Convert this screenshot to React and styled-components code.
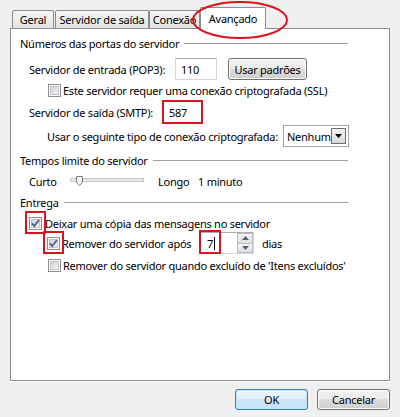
import React from 'react';
import styled, { createGlobalStyle } from 'styled-components';

const GlobalStyle = createGlobalStyle`
  html, body {
    margin: 0;
    padding: 0;
    background: #f0f0f0;
  }
  body {
    font-family: "Noto Sans", "Liberation Sans", sans-serif;
    font-size: 11px;
    letter-spacing: -0.25px;
    color: #000;
  }
`;

const MARK = '#d9141e';

const Dialog = styled.div`
  box-sizing: border-box;
  width: 400px;
  height: 417px;
  padding: 7px 10px 0 10px;
  display: flex;
  flex-direction: column;
`;

const TabStrip = styled.div`
  display: flex;
  align-items: flex-end;
  height: 21px;
  padding-left: 2px;
`;

const Tab = styled.div`
  position: relative;
  box-sizing: border-box;
  width: ${({ $w }) => $w}px;
  height: ${({ $active }) => ($active ? '22px' : '18px')};
  margin-bottom: ${({ $active }) => ($active ? '-1px' : '0')};
  margin-right: ${({ $gap }) => $gap || 0}px;
  display: flex;
  align-items: center;
  justify-content: center;
  border: 1px solid #898c95;
  border-bottom: none;
  border-radius: 2px 2px 0 0;
  background: ${({ $active }) =>
    $active ? '#fff' : 'linear-gradient(#f6f6f6, #e4e4e4)'};
  z-index: ${({ $active }) => ($active ? 2 : 1)};
  white-space: nowrap;
`;

const Ellipse = styled.svg`
  position: absolute;
  left: -9px;
  top: -7px;
  overflow: visible;
  pointer-events: none;
`;

const Panel = styled.div`
  box-sizing: border-box;
  width: 380px;
  height: 353px;
  border: 1px solid #898c95;
  background: #fff;
  padding: 6px 0 0 9px;
  display: flex;
  flex-direction: column;
  box-shadow: 0 1px 0 #fff;
`;

const GroupTitle = styled.div`
  display: flex;
  align-items: center;
  width: 328px;
  height: 16px;
  margin-top: ${({ $top }) => $top || 0}px;
  white-space: nowrap;

  &::after {
    content: '';
    flex: 1;
    height: 1px;
    margin-left: 5px;
    background: #a0a0a0;
  }
`;

const Row = styled.div`
  display: flex;
  align-items: center;
  height: ${({ $h }) => $h || 16}px;
  margin-top: ${({ $top }) => $top || 0}px;
  padding-left: ${({ $indent }) => $indent || 0}px;
  white-space: nowrap;
`;

const Label = styled.span`
  display: inline-block;
  width: ${({ $w }) => ($w ? `${$w}px` : 'auto')};
  margin-left: ${({ $left }) => $left || 0}px;
  flex-shrink: 0;
`;

const TextBox = styled.div`
  box-sizing: border-box;
  width: ${({ $w }) => $w}px;
  height: ${({ $h }) => $h || 22}px;
  padding-left: 5px;
  display: flex;
  align-items: center;
  background: #fff;
  border: ${({ $marked }) => ($marked ? `2px solid ${MARK}` : '1px solid #d3d7dd')};
  border-top-color: ${({ $marked }) => ($marked ? MARK : '#abadb3')};
`;

const PushButton = styled.button`
  box-sizing: border-box;
  width: ${({ $w }) => $w}px;
  height: ${({ $h }) => $h || 22}px;
  margin-left: ${({ $left }) => $left || 0}px;
  padding: 0;
  font: inherit;
  letter-spacing: inherit;
  color: #000;
  border: 1px solid ${({ $default }) => ($default ? '#3c7fb1' : '#707070')};
  border-radius: 3px;
  background: ${({ $default }) =>
    $default
      ? 'linear-gradient(#edf6fc, #e1f0fa 50%, #cfe6f5 50%, #c4e1f3)'
      : 'linear-gradient(#f2f2f2, #ebebeb 50%, #dddddd 50%, #cfcfcf)'};
  box-shadow: inset 0 0 0 1px ${({ $default }) => ($default ? '#bfe6fa' : '#fcfcfc')};
`;

const Combo = styled.div`
  box-sizing: border-box;
  width: 66px;
  height: 22px;
  padding: 0 2px 0 3px;
  display: flex;
  align-items: center;
  justify-content: space-between;
  background: #fff;
  border: 1px solid #a5a5a5;
`;

const ComboArrow = styled.div`
  box-sizing: border-box;
  width: 15px;
  height: 16px;
  display: flex;
  align-items: center;
  justify-content: center;
  border: 1px solid #707070;
  background: linear-gradient(#f2f2f2, #dadada);
`;

const CheckWrap = styled.span`
  position: relative;
  display: inline-flex;
  width: 13px;
  height: 13px;
  margin-right: ${({ $gap }) => $gap || 2}px;
  flex-shrink: 0;

  &::after {
    content: '';
    display: ${({ $marked }) => ($marked ? 'block' : 'none')};
    position: absolute;
    left: -4px;
    top: -6px;
    right: -4px;
    bottom: -4px;
    border: 2px solid ${MARK};
  }
`;

const Spin = styled.div`
  box-sizing: border-box;
  display: flex;
  width: 54px;
  height: 22px;
  background: #fff;
  border: 1px solid #d3d7dd;
  border-top-color: #abadb3;
  margin-right: 8px;
`;

const SpinField = styled.div`
  position: relative;
  flex: 1;
  display: flex;
  align-items: center;
  padding-left: 6px;

  &::after {
    content: '';
    position: absolute;
    left: -2px;
    top: -3px;
    width: 18px;
    height: 20px;
    border: 2px solid ${MARK};
  }
`;

const Caret = styled.span`
  display: inline-block;
  width: 1px;
  height: 13px;
  background: #000;
  margin-left: 1px;
`;

const SpinButtons = styled.div`
  display: flex;
  flex-direction: column;
  width: 16px;
`;

const SpinButton = styled.div`
  flex: 1;
  display: flex;
  align-items: center;
  justify-content: center;
  border: 1px solid #b8bcc4;
  border-top: ${({ $down }) => ($down ? 'none' : '1px solid #b8bcc4')};
  background: linear-gradient(#f4f4f4, #dedede);
`;

const Footer = styled.div`
  display: flex;
  justify-content: flex-end;
  gap: 9px;
  margin-top: 8px;
`;

function Checkbox({ checked, marked, gap }) {
  return (
    <CheckWrap $marked={marked} $gap={gap}>
      <svg width="13" height="13" viewBox="0 0 13 13">
        <defs>
          <linearGradient id="cbfill" x1="0" y1="0" x2="1" y2="1">
            <stop offset="0" stopColor="#cbcfd5" />
            <stop offset="1" stopColor="#f7f7f7" />
          </linearGradient>
        </defs>
        <rect x="0.5" y="0.5" width="12" height="12" fill="#fff" stroke="#8e8f8f" />
        <rect x="2.5" y="2.5" width="8" height="8" fill="url(#cbfill)" stroke="#c0c3c8" />
        {checked && (
          <path d="M3 6.3 L5.3 9 L10 3" fill="none" stroke="#4a5f97" strokeWidth="1.8" />
        )}
      </svg>
    </CheckWrap>
  );
}

function Slider() {
  return (
    <svg width="74" height="12" viewBox="0 0 74 12">
      <rect x="0.5" y="3.5" width="73" height="3" fill="#e7eaea" stroke="#c8c8c8" />
      <path d="M6.5 1.5 H12.5 V7.5 L9.5 10.5 L6.5 7.5 Z" fill="#f2f2f2" stroke="#7a7a7a" />
    </svg>
  );
}

function Arrow({ dir, color = '#000', w = 7 }) {
  const h = Math.ceil(w / 2);
  const d = dir === 'up' ? `M0 ${h} L${w / 2} 0 L${w} ${h} Z` : `M0 0 L${w} 0 L${w / 2} ${h} Z`;
  return (
    <svg width={w} height={h} viewBox={`0 0 ${w} ${h}`}>
      <path d={d} fill={color} />
    </svg>
  );
}

export default function App() {
  return (
    <>
      <GlobalStyle />
      <Dialog>
        <TabStrip>
          <Tab $w={42} $gap={1}>Geral</Tab>
          <Tab $w={94}>Servidor de saída</Tab>
          <Tab $w={51}>Conexão</Tab>
          <Tab $w={66} $active>
            Avançado
            <Ellipse width="96" height="38">
              <ellipse cx="48" cy="19" rx="47" ry="18" fill="none" stroke={MARK} strokeWidth="2" />
            </Ellipse>
          </Tab>
        </TabStrip>

        <Panel>
          <GroupTitle>Números das portas do servidor</GroupTitle>
          <Row $h={22} $top={7} $indent={9}>
            <Label $w={146}>Servidor de entrada (POP3):</Label>
            <TextBox $w={42}>110</TextBox>
            <PushButton $w={79} $left={11}>Usar padrões</PushButton>
          </Row>
          <Row $top={2} $indent={28}>
            <Checkbox />
            <Label>Este servidor requer uma conexão criptografada (SSL)</Label>
          </Row>
          <Row $h={24} $top={2} $indent={9}>
            <Label $w={133}>Servidor de saída (SMTP):</Label>
            <TextBox $w={41} $h={24} $marked>587</TextBox>
          </Row>
          <Row $h={22} $top={1} $indent={27}>
            <Label $w={236}>Usar o seguinte tipo de conexão criptografada:</Label>
            <Combo>
              Nenhum
              <ComboArrow>
                <Arrow dir="down" />
              </ComboArrow>
            </Combo>
          </Row>

          <GroupTitle $top={5}>Tempos limite do servidor</GroupTitle>
          <Row $h={20} $top={3} $indent={9}>
            <Label $w={41}>Curto</Label>
            <Slider />
            <Label $w={40} $left={14}>Longo</Label>
            <Label>1 minuto</Label>
          </Row>

          <GroupTitle $top={3}>Entrega</GroupTitle>
          <Row $top={5} $indent={9}>
            <Checkbox checked marked gap={3} />
            <Label>Deixar uma cópia das mensagens no servidor</Label>
          </Row>
          <Row $h={22} $top={1} $indent={27}>
            <Checkbox checked marked />
            <Label $w={138}>Remover do servidor após</Label>
            <Spin>
              <SpinField>
                7<Caret />
              </SpinField>
              <SpinButtons>
                <SpinButton>
                  <Arrow dir="up" color="#4d6185" />
                </SpinButton>
                <SpinButton $down>
                  <Arrow dir="down" color="#4d6185" />
                </SpinButton>
              </SpinButtons>
            </Spin>
            <Label>dias</Label>
          </Row>
          <Row $top={3} $indent={28}>
            <Checkbox />
            <Label>Remover do servidor quando excluído de 'Itens excluídos'</Label>
          </Row>
        </Panel>

        <Footer>
          <PushButton $w={73} $h={21} $default>OK</PushButton>
          <PushButton $w={73} $h={21}>Cancelar</PushButton>
        </Footer>
      </Dialog>
    </>
  );
}
